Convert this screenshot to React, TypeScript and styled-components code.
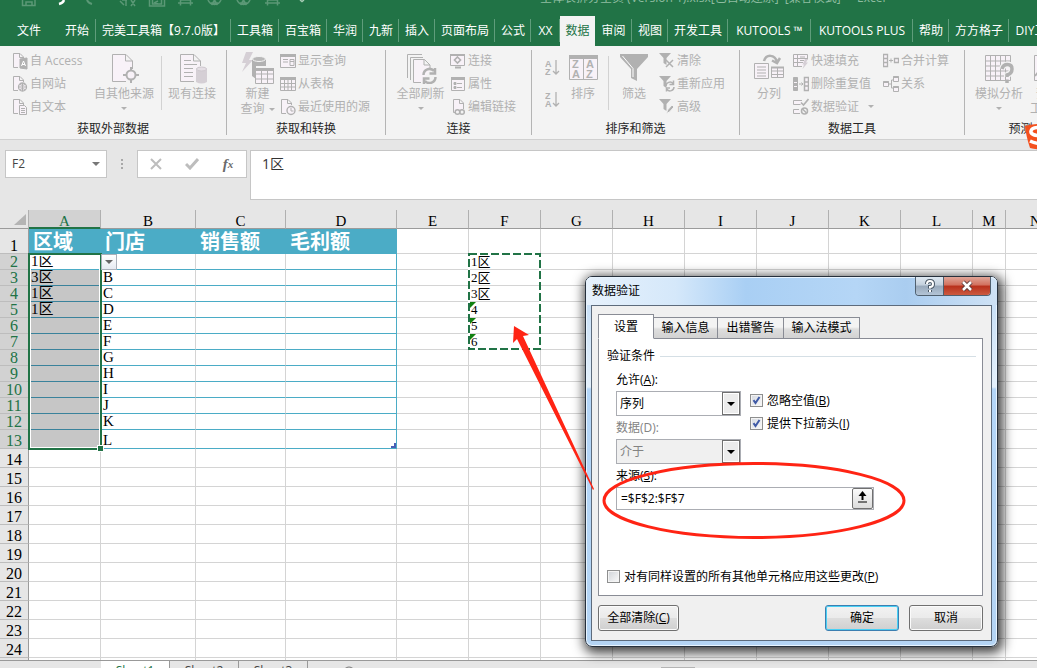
import React from "react";
import styled, { createGlobalStyle, css } from "styled-components";

const UI = `"Open Sans", "Noto Sans CJK SC", sans-serif`;
const CELL = `"Liberation Serif", "Noto Sans CJK SC", serif`;
const GREEN = "#217346";

const Global = createGlobalStyle`
  *, *::before, *::after { box-sizing: border-box; }
  body { margin: 0; background: #e6e6e6; font: 12px/16px ${UI}; color: #222; overflow: hidden; }
  button, input, select { font: inherit; color: inherit; margin: 0; }
`;

const Shell = styled.div`
  position: relative;
  display: flex;
  flex-direction: column;
  height: 100vh;
  overflow: hidden;
`;

/* ---------- title bar and tabs ---------- */

const TitleBar = styled.header`
  display: flex;
  align-items: flex-end;
  flex: 0 0 16px;
  overflow: hidden;
  background: ${GREEN};
  color: #8fbda1;
`;

const QuickAccess = styled.div`
  flex: 0 0 540px;
  height: 16px;
`;

const FileName = styled.span`
  height: 26px;
  white-space: pre;
  line-height: 16px;
`;

const TabBar = styled.nav`
  display: flex;
  flex: 0 0 30px;
  overflow: hidden;
  background: ${GREEN};
`;

const Tab = styled.button<{ $w: number; $active?: boolean; $line?: boolean }>`
  position: relative;
  flex: 0 0 ${(p) => p.$w}px;
  padding: 0;
  border: 0;
  white-space: nowrap;
  text-align: center;
  line-height: 28px;
  background: ${(p) => (p.$active ? "#f3f3f3" : "transparent")};
  color: ${(p) => (p.$active ? GREEN : "#fff")};
  ${(p) =>
    p.$line &&
    css`
      &::after {
        content: "";
        position: absolute;
        right: 0;
        top: 3px;
        bottom: 4px;
        width: 1px;
        background: #5f9d7b;
      }
    `}
`;

/* ---------- ribbon ---------- */

const Ribbon = styled.section`
  display: flex;
  flex: 0 0 94px;
  padding: 4px 0;
  overflow: hidden;
  background: #f3f3f3;
  border-bottom: 1px solid #d0d0d0;
  color: #b1b1b1;
`;

const Group = styled.div<{ $w: number; $pad: number }>`
  display: flex;
  flex-direction: column;
  flex: 0 0 ${(p) => p.$w}px;
  padding-left: ${(p) => p.$pad}px;
  border-right: 1px solid #b4b4b4;
`;

const GroupBody = styled.div`
  display: flex;
  flex: 0 0 70px;
`;

const GroupLabel = styled.div<{ $pad: number }>`
  margin-left: -${(p) => p.$pad}px;
  text-align: center;
  line-height: 18px;
  color: #262626;
`;

const SmallColumn = styled.div<{ $w: number }>`
  display: flex;
  flex-direction: column;
  flex: 0 0 ${(p) => p.$w}px;
  margin-top: -1px;
`;

const SmallButton = styled.button`
  display: flex;
  align-items: center;
  flex: none;
  gap: 2px;
  height: 23px;
  padding: 0;
  border: 0;
  background: none;
  white-space: nowrap;
  svg { flex: none; }
`;

const LargeButton = styled.button<{ $w: number }>`
  display: flex;
  flex-direction: column;
  align-items: center;
  flex: 0 0 ${(p) => p.$w}px;
  padding: 2px 0 0;
  border: 0;
  background: none;
  line-height: 15px;
  white-space: nowrap;
`;

const LargeLabel = styled.span`
  margin-top: 2px;
`;

const Caret = styled.i<{ $top?: number; $left?: number }>`
  display: inline-block;
  margin-top: ${(p) => p.$top ?? 0}px;
  margin-left: ${(p) => p.$left ?? 0}px;
  vertical-align: middle;
  border: 3px solid transparent;
  border-top-color: #b1b1b1;
  border-bottom: 0;
`;

const Divider = styled.div<{ $m: number }>`
  flex: 0 0 1px;
  height: 54px;
  margin: 6px ${(p) => p.$m}px 0;
  background: #d2d2d2;
`;

const FilterTools = styled.div`
  display: flex;
  gap: 9px;
`;

const SortColumn = styled.div`
  display: flex;
  flex-direction: column;
  gap: 12px;
  flex: 0 0 22px;
  padding-top: 8px;
`;

const IconButton = styled.button`
  height: 20px;
  padding: 0;
  border: 0;
  background: none;
  text-align: left;
`;

/* ---------- formula bar ---------- */

const FormulaBar = styled.section`
  display: flex;
  align-items: flex-start;
  flex: 0 0 70px;
  padding: 10px 0 0 5px;
  background: #e6e6e6;
`;

const NameBox = styled.div`
  display: flex;
  align-items: center;
  flex: 0 0 102px;
  min-width: 0;
  height: 28px;
  padding: 0 6px;
  background: #fff;
  border: 1px solid #c6c6c6;
`;

const NameInput = styled.input`
  flex: 1;
  width: 0;
  min-width: 0;
  padding: 0;
  border: 0;
  outline: 0;
  background: none;
  color: #444;
`;

const NameCaret = styled.i`
  border: 4px solid transparent;
  border-top-color: #777;
  border-bottom: 0;
`;

const Grip = styled.div`
  display: flex;
  flex-direction: column;
  align-items: center;
  gap: 2px;
  flex: 0 0 30px;
  padding-top: 9px;
  i { width: 2px; height: 2px; background: #a8a8a8; }
`;

const FormulaTools = styled.div`
  display: flex;
  flex: 0 0 110px;
  height: 28px;
  background: #fff;
  border: 1px solid #c6c6c6;
`;

const ToolButton = styled.button`
  display: flex;
  flex: 1;
  align-items: center;
  justify-content: center;
  padding: 0;
  border: 0;
  background: none;
  font: italic bold 15px/16px "Liberation Serif", serif;
  color: #6a6a6a;
  sub { font-size: 11px; line-height: 8px; vertical-align: baseline; }
`;

const FormulaInput = styled.input`
  flex: 1;
  min-width: 0;
  height: 50px;
  margin-left: 3px;
  padding: 0 11px 24px;
  border: 1px solid #c6c6c6;
  border-right: 0;
  border-radius: 0;
  outline: 0;
  background: #fff;
  font-size: 14px;
  color: #333;
`;

/* ---------- sheet ---------- */

const SheetArea = styled.main`
  flex: 1;
  min-height: 0;
  overflow: hidden;
  background: #fff;
`;

const Sheet = styled.table`
  width: 1066px;
  table-layout: fixed;
  border-spacing: 0;
  font: 15px/15px ${CELL};
  color: #000;
  th, td { padding: 0; font-weight: normal; white-space: nowrap; }
`;

const ColHead = styled.th<{ $sel?: boolean }>`
  height: 19px;
  line-height: 14px;
  vertical-align: bottom;
  border-right: 1px solid #b0b0b0;
  border-bottom: 1px solid ${(p) => (p.$sel ? GREEN : "#9b9b9b")};
  box-shadow: ${(p) => (p.$sel ? `inset 0 -1px ${GREEN}` : "none")};
  background: ${(p) => (p.$sel ? "#d2d2d2" : "#e6e6e6")};
  color: ${(p) => (p.$sel ? GREEN : "#000")};
`;

const Corner = styled(ColHead)`
  svg { display: block; margin: 0 0 3px 14px; }
`;

const RowHead = styled.th<{ $sel?: boolean }>`
  vertical-align: bottom;
  font-size: 16px;
  border-right: 1px solid #9b9b9b;
  border-bottom: 1px solid #bdbdbd;
  background: ${(p) => (p.$sel ? "#d2d2d2" : "#e6e6e6")};
  color: ${(p) => (p.$sel ? GREEN : "#000")};
`;

type CellKind = "plain" | "head" | "sel" | "active" | "table" | "tableEnd";

const Cell = styled.td<{ $kind: CellKind }>`
  position: relative;
  padding-left: 2px !important;
  vertical-align: bottom;
  border-right: 1px solid #d4d4d4;
  border-bottom: 1px solid #d4d4d4;
  ${(p) =>
    p.$kind === "head" &&
    css`
      padding-left: 4px !important;
      background: #4bacc6;
      border-color: #4bacc6;
      color: #fff;
      font-size: 20px;
      font-weight: bold !important;
      line-height: 21px;
    `}
  ${(p) =>
    p.$kind === "sel" &&
    css`
      background: #c6c6c6;
      border-bottom-color: #3a829b;
    `}
  ${(p) =>
    (p.$kind === "active" || p.$kind === "table" || p.$kind === "tableEnd") &&
    css`
      border-bottom-color: #4bacc6;
    `}
  ${(p) => p.$kind === "tableEnd" && css`border-right-color: #4bacc6;`}
`;

const ListText = styled.span`
  font-size: 13px;
`;

const Selection = styled.div`
  position: absolute;
  z-index: 1;
  left: -1px;
  top: -1px;
  width: 74px;
  height: 197px;
  border: 2px solid ${GREEN};
  box-shadow: inset 0 0 0 1px #fff;
  pointer-events: none;
  &::after {
    content: "";
    position: absolute;
    right: -3px;
    bottom: -3px;
    width: 5px;
    height: 5px;
    background: ${GREEN};
    outline: 1px solid #fff;
  }
`;

const DropButton = styled.button`
  position: absolute;
  z-index: 2;
  left: 0;
  top: 0;
  width: 16px;
  height: 16px;
  padding: 0;
  border: 1px solid #a9b0ba;
  background: linear-gradient(#fff, #e6ebf2);
  display: flex;
  align-items: center;
  justify-content: center;
`;

const Ants = styled.svg`
  position: absolute;
  z-index: 1;
  left: -1px;
  top: -1px;
  pointer-events: none;
`;

const ErrorMark = styled.i`
  position: absolute;
  left: 1px;
  top: 0;
  border: 3px solid #108010;
  border-right-color: transparent;
  border-bottom-color: transparent;
`;

const TableCorner = styled.svg`
  position: absolute;
  right: 0;
  bottom: 0;
`;

/* ---------- sheet tabs ---------- */

const SheetTabs = styled.footer`
  display: flex;
  flex: 0 0 8px;
  overflow: hidden;
  padding-left: 101px;
  border-top: 1px solid #999;
  background: #e6e6e6;
`;

const SheetTab = styled.button<{ $active?: boolean }>`
  flex: 0 0 69px;
  height: 20px;
  padding: 0;
  border: 0;
  border-right: 1px solid #999;
  background: ${(p) => (p.$active ? "#fff" : "none")};
  color: ${(p) => (p.$active ? GREEN : "#444")};
  line-height: 20px;
`;

const AddSheet = styled.button`
  flex: 0 0 82px;
  height: 24px;
  padding: 4px 0 0;
  border: 0;
  background: none;
`;

const ScrollTrack = styled.div`
  flex: 0 0 34px;
  height: 12px;
  margin: 6px 0 0 271px;
  background: #b4b4b4;
`;

/* ---------- dialog ---------- */

const Dialog = styled.section`
  position: absolute;
  z-index: 5;
  left: 585px;
  top: 276px;
  display: flex;
  flex-direction: column;
  width: 413px;
  padding: 0 5px 5px;
  border: 1px solid #26303c;
  border-radius: 7px;
  background: linear-gradient(#dcecfb 0, #c9e0f7 28px, #e4f0fb 110px, #b4d6f8 112px, #b4d4f4 100%);
  box-shadow: inset 0 0 0 1px #e8f4ff, 2px 3px 12px 3px rgba(0, 0, 0, 0.75);
  color: #000;
`;

const DialogTitle = styled.div`
  display: flex;
  justify-content: space-between;
  height: 28px;
  margin: 0 -5px;
  padding: 0 6px 0 5px;
  border-radius: 6px 6px 0 0;
  background: linear-gradient(90deg, #e6f1fc 0, #d5e8fa 90px, #a9cff4 160px, #b5d6f6 270px, #aacdf0 320px, #cfe2f5 100%);
  box-shadow: inset 0 1px #e8f4ff;
`;

const DialogName = styled.h2`
  margin: 6px 0 0 1px;
  font-size: 12px;
  line-height: 16px;
  font-weight: normal;
`;

const WindowButtons = styled.div`
  display: flex;
  height: 19px;
  border: 1px solid #50606f;
  border-top: 0;
  border-radius: 0 0 4px 4px;
  overflow: hidden;
`;

const WindowButton = styled.button<{ $close?: boolean }>`
  display: flex;
  align-items: center;
  justify-content: center;
  width: ${(p) => (p.$close ? 47 : 27)}px;
  padding: 0;
  border: 0;
  border-left: ${(p) => (p.$close ? "1px solid #50606f" : "0")};
  background: ${(p) =>
    p.$close
      ? "linear-gradient(#e0a598 0, #d2705d 45%, #b8301b 50%, #cc5a40 100%)"
      : "linear-gradient(#dfe9f2 0, #c3d0dd 45%, #98a9bb 50%, #b3c4d6 100%)"};
`;

const Client = styled.div`
  padding: 8px 8px 9px 6px;
  border: 1px solid #5d6b7c;
  background: #f0f0f0;
`;

const DialogTabs = styled.div`
  display: flex;
  align-items: flex-end;
  height: 25px;
  margin-bottom: -1px;
`;

const DialogTab = styled.button<{ $w: number; $active?: boolean }>`
  position: relative;
  width: ${(p) => p.$w}px;
  height: ${(p) => (p.$active ? 25 : 22)}px;
  padding: 0;
  border: 1px solid #898c95;
  border-left-width: ${(p) => (p.$active ? 1 : 0)}px;
  border-bottom-color: ${(p) => (p.$active ? "#fff" : "#898c95")};
  background: ${(p) => (p.$active ? "#fff" : "linear-gradient(#f3f3f3 45%, #dedede 55%, #d2d2d2)")};
`;

const Panel = styled.div`
  padding: 9px 6px 10px 8px;
  border: 1px solid #898c95;
  background: #fff;
`;

const Legend = styled.div`
  display: flex;
  align-items: center;
  gap: 5px;
  margin-bottom: 8px;
  &::after { content: ""; flex: 1; height: 1px; background: #d5dfe5; }
`;

const Fields = styled.div`
  display: flex;
  gap: 9px;
  padding-left: 9px;
`;

const SelectColumn = styled.div`
  display: flex;
  flex-direction: column;
  flex: 0 0 125px;
`;

const CheckColumn = styled.div`
  padding-top: 17px;
`;

const FieldLabel = styled.label<{ $off?: boolean }>`
  margin-bottom: 3px;
  color: ${(p) => (p.$off ? "#838383" : "#000")};
`;

const SelectBox = styled.div<{ $off?: boolean }>`
  position: relative;
  height: 25px;
  margin-bottom: 4px;
  border: 1px solid #abadb3;
  background: ${(p) => (p.$off ? "#f0f0f0" : "#fff")};
  color: ${(p) => (p.$off ? "#838383" : "#000")};
  select {
    width: 100%;
    height: 23px;
    padding: 0 3px;
    border: 0;
    outline: 0;
    appearance: none;
    background: none;
    opacity: 1;
  }
  svg {
    position: absolute;
    right: 0;
    top: 0;
    pointer-events: none;
  }
`;

const SourceRow = styled.div`
  display: flex;
  width: 258px;
  height: 23px;
  margin: 3px 0 58px 9px;
  border: 1px solid #abadb3;
  background: #fff;
`;

const SourceInput = styled.input`
  flex: 1;
  min-width: 0;
  padding: 0 4px;
  border: 0;
  outline: 0;
  background: none;
`;

const PickButton = styled.button`
  width: 21px;
  padding: 0;
  border: 1px solid #707070;
  border-radius: 2px;
  background: linear-gradient(#fbfbfb, #dcdcdc);
`;

const SourceLabel = styled.label`
  display: block;
  margin-left: 9px;
`;

const CheckLabel = styled.label<{ $tall?: boolean }>`
  display: flex;
  align-items: center;
  gap: 4px;
  height: ${(p) => (p.$tall ? 23 : 17)}px;
  white-space: nowrap;
`;

const Check = styled.input`
  appearance: none;
  width: 13px;
  height: 13px;
  border: 1px solid #8e8f8f;
  background: linear-gradient(135deg, #cfd3d8, #fafafa);
  box-shadow: inset 0 0 0 1px #f4f4f4;
  &:checked {
    background: url("data:image/svg+xml,%3Csvg xmlns='http://www.w3.org/2000/svg' viewBox='0 0 11 11'%3E%3Cpath d='M2.5 5.2L4.5 8 8.5 2' fill='none' stroke='%233f5aa6' stroke-width='2'/%3E%3C/svg%3E"), linear-gradient(135deg, #d5d9e0, #fafafa);
  }
`;

const Actions = styled.div`
  display: flex;
  gap: 10px;
  margin-top: 9px;
`;

const ActionButton = styled.button<{ $w: number; $main?: boolean; $first?: boolean }>`
  width: ${(p) => p.$w}px;
  height: 26px;
  margin-right: ${(p) => (p.$first ? "auto" : 0)};
  padding: 0;
  border: 1px solid ${(p) => (p.$main ? "#3c7fb1" : "#707070")};
  border-radius: 3px;
  background: linear-gradient(#f2f2f2, #ebebeb 48%, #dddddd 52%, #cfcfcf);
  box-shadow: inset 0 0 0 1px ${(p) => (p.$main ? "#48d0f5" : "#fbfbfb")};
`;

const Annotation = styled.svg`
  position: absolute;
  z-index: 6;
  left: 500px;
  top: 310px;
  pointer-events: none;
`;

const SideBadge = styled.svg`
  position: absolute;
  z-index: 4;
  left: 1024px;
  top: 122px;
`;

/* ---------- icons ---------- */

const G = "#b1b1b1";
const P = "#f8f2f8";

const SmallIcon = ({ children }: { children: React.ReactNode }) => (
  <svg width="16" height="18" viewBox="0 0 16 18" fill="none" stroke={G} strokeWidth="1">
    {children}
  </svg>
);
const BigIcon = ({ children, w = 32 }: { children: React.ReactNode; w?: number }) => (
  <svg width={w} height="32" viewBox={`0 0 ${w} 32`} fill="none" stroke={G} strokeWidth="1">
    {children}
  </svg>
);

const page = "M6 15.5H1.5V1.5H8L11.5 5v2M7.5 1.5v4h4";
const icons: Record<string, React.ReactNode> = {
  access: (
    <SmallIcon>
      <path d={page} fill={P} />
      <path d="M8 7l7-1v11l-7-1z" fill={G} />
      <path d="M9.5 14l2-5 2 5M10 12.500h3" stroke="#fff" />
    </SmallIcon>
  ),
  web: (
    <SmallIcon>
      <path d={page} fill={P} />
      <circle cx="10.500" cy="12" r="4" fill={P} strokeWidth="1.300" />
      <path d="M6.500 12h8M10.500 8v8M8 9.500q2.500 2 5 0M8 14.500q2.500-2 5 0" />
    </SmallIcon>
  ),
  text: (
    <SmallIcon>
      <path d={page} fill={P} />
      <path d="M7.500 7.500h5l2 2v7h-7zM9 10.500h4M9 12.500h4M9 14.500h4" fill={P} />
    </SmallIcon>
  ),
  showQuery: (
    <SmallIcon>
      <path d="M.5 2.500h15v13H.5z" fill={P} />
      <path d="M0 3.500h16" strokeWidth="3" />
      <path d="M3 7.500h5M3 10h5M10 7.500h4v6h-4zM10 9.500h4" />
    </SmallIcon>
  ),
  table: (
    <SmallIcon>
      <path d="M.5 2.500h15v13H.5zM.5 8.500h15M.5 12h15M4.500 3v12.500M8 3v12.500M11.500 3v12.500" fill={P} />
      <path d="M0 3.500h16" strokeWidth="3" />
    </SmallIcon>
  ),
  recent: (
    <SmallIcon>
      <path d={page} fill={P} />
      <circle cx="11" cy="12.500" r="4" fill={P} strokeWidth="1.400" />
      <path d="M11 10v3h2.500" />
    </SmallIcon>
  ),
  link: (
    <SmallIcon>
      <path d="M.5 2.500h14v11H.5z" fill={P} />
      <path d="M0 3h15M5 15.500h6" strokeWidth="2" />
      <path d="M7.500 5L10.500 8l-3 3-3-3z" strokeWidth="1.600" />
    </SmallIcon>
  ),
  props: (
    <SmallIcon>
      <path d="M1.500 2.500h13v13h-13z" fill={P} />
      <path d="M1 3.500h14" strokeWidth="3" />
      <path d="M7 8.500h5M7 12.500h5" />
      <path d="M4 7.500h2v2H4zM4 11.500h2v2H4z" fill={G} />
    </SmallIcon>
  ),
  editLink: (
    <SmallIcon>
      <path d="M5 14.500H3.500v-13H10L13.500 5v6M9.500 1.500v4h4" fill={P} />
      <circle cx="7.500" cy="14" r="2.300" strokeWidth="1.500" />
      <circle cx="12" cy="14" r="2.300" strokeWidth="1.500" />
    </SmallIcon>
  ),
  clear: (
    <SmallIcon>
      <path d="M0 1h12L7.500 6v7L4.500 11V6z" fill={G} stroke="none" />
      <path d="M7 8l7 7M14 8l-7 7" strokeWidth="1.500" />
    </SmallIcon>
  ),
  reapply: (
    <SmallIcon>
      <path d="M0 1h12L7.500 6v7L4.500 11V6z" fill={G} stroke="none" />
      <path d="M7 11a4 4 0 0 1 7-2.500M14.500 5.500v4h-4M15 12a4 4 0 0 1-7 2.500M7.500 16.500v-3.500h3.500" strokeWidth="1.500" />
    </SmallIcon>
  ),
  advanced: (
    <SmallIcon>
      <path d="M0 1h12L7.500 6v7L4.500 11V6z" fill={G} stroke="none" />
      <path d="M7.500 15.500l1-3.500 4.500-5 2 2-4.500 5z" fill={G} stroke="#f3f3f3" />
    </SmallIcon>
  ),
  flash: (
    <SmallIcon>
      <path d="M9 14.500H.5v-12h14v5M.5 6.500h14M.5 10.500H10M4.500 2.500v12M7 5h5M7 8.500h4" fill={P} />
      <path d="M12 7h3l-2 3.500h2L9.500 17l1.500-4.500H9.500z" fill="#d5cfd5" stroke="none" />
    </SmallIcon>
  ),
  dedupe: (
    <SmallIcon>
      <path d="M.5 2.500h4v13h-4zM.5 7h4M.5 11h4" fill={G} />
      <path d="M1 7.500h3M1 11.500h3" stroke={P} />
      <path d="M11.500 2.500h4v13h-4zM11.500 7h4M11.500 11h4" fill={P} strokeWidth="1.500" />
      <path d="M6 9h4M8.500 7.500L10 9l-1.500 1.500" />
    </SmallIcon>
  ),
  validate: (
    <SmallIcon>
      <path d="M9 2.500H.5v4h7M6 11.500H.5v4H7" fill={P} />
      <path d="M8 4.500l2.500 2.500L15.500 1" strokeWidth="1.600" />
      <circle cx="11.500" cy="13" r="3" strokeWidth="1.500" />
      <path d="M9.500 11l4 4" strokeWidth="1.500" />
    </SmallIcon>
  ),
  consolidate: (
    <SmallIcon>
      <path d="M.5 2.500h4v12h-4zM.5 6.500h4M.5 10.500h4M11.500 6.500h4v4h-4z" fill={P} strokeWidth="1.300" />
      <path d="M6 8.500h4M8 6.500v4" />
    </SmallIcon>
  ),
  relations: (
    <SmallIcon>
      <path d="M6 9h2.500V5M8.500 9v4h2M8.500 5h2" />
      <path d="M.5 6.500h5v5h-5zM10.500 1.500h5v5h-5zM10.500 11.500h5v5h-5z" fill={P} />
      <path d="M.5 7h5M10.500 2h5M10.500 12h5" strokeWidth="2" />
    </SmallIcon>
  ),
};

const letters = { fill: G, stroke: "none", fontFamily: "Liberation Sans", fontSize: 9, fontWeight: 700 };

const SortIcon = ({ a, b }: { a: string; b: string }) => (
  <svg width="16" height="20" viewBox="0 0 16 20" fill="none" stroke={G}>
    <text x="0" y="9" {...letters}>{a}</text>
    <text x="0" y="17" {...letters}>{b}</text>
    <path d="M11 2v14M8 13l3 3 3-3" strokeWidth="1.300" />
  </svg>
);

const big: Record<string, React.ReactNode> = {
  other: (
    <BigIcon>
      <path d="M18 29.500H4.500v-27H18L24.500 9v8M17.500 2.500V9h7" fill={P} />
      <circle cx="23" cy="23" r="4.500" strokeWidth="2" fill={P} />
      <path d="M23 15v4M23 27v4M15 23h4M27 23h4" strokeWidth="2" />
    </BigIcon>
  ),
  existing: (
    <BigIcon>
      <path d="M18 29.500H4.500v-27H18L24.500 9v5M17.500 2.500V9h7" fill={P} />
      <path d="M8 8.500h7M8 12.500h13M8 16.500h9M8 20.500h9M8 24.500h9" />
      <path d="M20 16.500q5.500-3 11 0V30q-5.500 3-11 0z" fill="#d5cfd5" stroke="none" />
      <ellipse cx="25.500" cy="17" rx="5" ry="2" fill="#e4dee4" stroke="#cfc9cf" />
    </BigIcon>
  ),
  query: (
    <BigIcon>
      <path d="M4 0h7L7 8h4L0 20l4-9H0z" fill="#d5cfd5" stroke="none" />
      <path d="M10 7q7-4 14 0v7h-10v13l-4-3z" fill={G} stroke="none" />
      <ellipse cx="17" cy="7" rx="6.500" ry="2.500" fill="#b8b8b8" stroke="#f3f3f3" />
      <path d="M13.500 17.500h18v14h-18zM13.500 22h18M13.500 27h18M19.500 18v13M25.500 18v13" fill={P} />
      <path d="M13 17.500h19" strokeWidth="3" />
    </BigIcon>
  ),
  refresh: (
    <BigIcon>
      <path d="M2.500 26V2.500H17M5.500 28V5.500H18" />
      <path d="M16 30.500H8.500v-23h11L25 13v5M19 7.500V13h6" fill={P} />
      <path d="M18.500 23a6 6 0 0 1 10.500-4M30 16v5.500h-5.500M30.500 25a6 6 0 0 1-10.500 4M19 32v-5.500h5.500" strokeWidth="2.500" />
    </BigIcon>
  ),
  sort: (
    <BigIcon>
      <path d="M2.500 4.500h28v23h-28zM16.500 4v23.500" fill={P} />
      <path d="M2 5h29" strokeWidth="4" />
      <text x="5" y="16" {...letters} fontSize={11}>Z</text>
      <text x="5" y="26" {...letters} fontSize={11}>A</text>
      <text x="19" y="16" {...letters} fontSize={11}>A</text>
      <text x="19" y="26" {...letters} fontSize={11}>Z</text>
    </BigIcon>
  ),
  filter: (
    <BigIcon>
      <path d="M2 2h28v3L19 17v12l-6-3V17L2 5z" fill={G} stroke="none" />
      <path d="M4.500 4L15 16.500V25" stroke="#fff" />
    </BigIcon>
  ),
  columns: (
    <BigIcon>
      <path d="M1.500 11.500h14v15h-14zM4 15h9M4 18h9M4 21h9M4 24h9" fill={P} />
      <path d="M18.500 15.500h12v10h-12zM18.500 19h12M18.500 22.500h12M24.500 15.500v10" fill={P} />
      <path d="M18 15.500h13" strokeWidth="2" />
      <path d="M11 9c2-7 11-7 13 1M27 6l-3 5-5-2.500" strokeWidth="2.500" />
    </BigIcon>
  ),
  whatIf: (
    <BigIcon>
      <path d="M2.500 3.500h25v25h-25zM2.500 9h25M2.500 14h25M2.500 19h25M2.500 24h25M7.500 3.500v25M12.500 3.500v25M17.500 3.500v25M22.500 3.500v25" fill={P} />
      <path d="M19 17q1-4.500 5.500-4.500T29 17t-5 6v2" stroke="#f3f3f3" strokeWidth="6" />
      <path d="M19 17q1-4.500 5.500-4.500T29 17t-5 6v2M24 27.500v3.500" strokeWidth="3.500" />
    </BigIcon>
  ),
  forecast: (
    <BigIcon>
      <path d="M2.500 3.500h25v25h-25z" fill={P} />
      <path d="M3 24l8-10 6 5 9-12" strokeWidth="2" />
    </BigIcon>
  ),
};

const Small = ({ icon, label, caret }: { icon: string; label: string; caret?: boolean }) => (
  <SmallButton>
    {icons[icon]}
    <span>{label}</span>
    {caret && <Caret $left={7} />}
  </SmallButton>
);

const Large = ({ icon, label, w, caret }: { icon: string; label: string; w: number; caret?: boolean }) => (
  <LargeButton $w={w}>
    {big[icon]}
    <LargeLabel>{label}</LargeLabel>
    {caret && <Caret $top={6} />}
  </LargeButton>
);

/* ---------- data ---------- */

const tabs: [string, number, number?][] = [
  ["文件", 58, 0],
  ["开始", 38],
  ["完美工具箱【9.7.0版】", 135],
  ["工具箱", 48],
  ["百宝箱", 48],
  ["华润", 36],
  ["九新", 36],
  ["插入", 36],
  ["页面布局", 60],
  ["公式", 36],
  ["XX", 29],
  ["数据", 35, 0],
  ["审阅", 37],
  ["视图", 36],
  ["开发工具", 60],
  ["KUTOOLS ™", 83],
  ["KUTOOLS PLUS", 102],
  ["帮助", 36],
  ["方方格子", 60],
  ["DIY工具箱", 68],
];

const columns: [string, number][] = [
  ["A", 72], ["B", 95], ["C", 90], ["D", 111], ["E", 72], ["F", 72], ["G", 72],
  ["H", 72], ["I", 72], ["J", 72], ["K", 72], ["L", 72], ["M", 33], ["N", 60],
];

const values: Record<string, string> = {
  A1: "区域", B1: "门店", C1: "销售额", D1: "毛利额",
  A2: "1区", A3: "3区", A4: "1区", A5: "1区",
  B3: "B", B4: "C", B5: "D", B6: "E", B7: "F", B8: "G", B9: "H", B10: "I", B11: "J", B12: "K", B13: "L",
  F2: "1区", F3: "2区", F4: "3区", F5: "4", F6: "5", F7: "6",
};

const rows = Array.from({ length: 25 }, (_, i) => i + 1);
const rowHeight = (r: number) => (r === 1 ? 25 : r <= 12 ? 16 : 19);

const kindOf = (col: string, r: number): CellKind => {
  if (r > 13 || !"ABCD".includes(col)) return "plain";
  if (r === 1) return "head";
  if (col === "A") return r === 2 ? "active" : "sel";
  return col === "D" ? "tableEnd" : "table";
};

const Extras = ({ id }: { id: string }) => {
  if (id === "A2") return <Selection />;
  if (id === "B2")
    return (
      <DropButton aria-label="下拉">
        <svg width="8" height="4"><path d="M0 0h8L4 4z" fill="#666" /></svg>
      </DropButton>
    );
  if (id === "F2")
    return (
      <Ants width="73" height="97">
        <rect x="1" y="1" width="71" height="95" fill="none" stroke="#fff" strokeWidth="2" />
        <rect x="1" y="1" width="71" height="95" fill="none" stroke={GREEN} strokeWidth="2" strokeDasharray="8 3" />
      </Ants>
    );
  if (id === "F5" || id === "F6" || id === "F7") return <ErrorMark />;
  if (id === "D13")
    return (
      <TableCorner width="5" height="5"><path d="M3 0h2v5H0V3h3z" fill="#4a5fb5" /></TableCorner>
    );
  return null;
};

export default function App() {
  return (
    <Shell>
      <Global />
      <TitleBar>
        <QuickAccess>
          <svg width="320" height="16" viewBox="0 0 320 16" fill="none" stroke="#5b9876" strokeWidth="1.500">
            <path d="M22.500 0v5.500h12.500V0M26 5V2h6v3" />
            <path d="M64 0q-1 3-5 4" stroke="#fff" strokeWidth="2.500" />
            <path d="M87 0q1 3 5 4" strokeWidth="2" />
            <path d="M120 1l4 4M126 0v6M131 0l4 6M135 0l-4 6M122 0h5" />
            <path d="M149.500 0v6h15V0M152.500 0v4h9V0M158 1l-3 1.500 3 1.500" />
            <path d="M178 3h15M180.500 5.500V0M190.500 5.500V0M181 0h9" />
            <path d="M208 0a7 7 0 0 0 13 0M214.500 0l-3 5M214.500 0l3 5M211 3l7 0" />
            <path d="M237 0a7 7 0 0 0 13 0M243.500 0l-3 5M243.500 0l3 5M240 3h7" />
            <path d="M265 3h15M267.500 5.500V0M277.500 5.500V0M268 0h9" />
            <path d="M300 0l2 1.500L304 0" stroke="#a5cbb4" />
          </svg>
        </QuickAccess>
        <FileName>全体表拆分全员 (Version 1).xlsx[已自动还原]  [兼容模式]  -  Excel</FileName>
      </TitleBar>

      <TabBar>
        {tabs.map(([name, w, line]) => (
          <Tab key={name} $w={w} $active={name === "数据"} $line={line !== 0}>
            {name}
          </Tab>
        ))}
      </TabBar>

      <Ribbon>
        <Group $w={227} $pad={12}>
          <GroupBody>
            <SmallColumn $w={78}>
              <Small icon="access" label="自 Access" />
              <Small icon="web" label="自网站" />
              <Small icon="text" label="自文本" />
            </SmallColumn>
            <Large icon="other" label="自其他来源" w={68} caret />
            <Divider $m={3} />
            <Large icon="existing" label="现有连接" w={54} />
          </GroupBody>
          <GroupLabel $pad={12}>获取外部数据</GroupLabel>
        </Group>
        <Group $w={159} $pad={8}>
          <GroupBody>
            <LargeButton $w={45}>
              {big.query}
              <LargeLabel>
                新建
                <br />
                查询
                <Caret $left={4} />
              </LargeLabel>
            </LargeButton>
            <SmallColumn $w={100}>
              <Small icon="showQuery" label="显示查询" />
              <Small icon="table" label="从表格" />
              <Small icon="recent" label="最近使用的源" />
            </SmallColumn>
          </GroupBody>
          <GroupLabel $pad={8}>获取和转换</GroupLabel>
        </Group>
        <Group $w={146} $pad={5}>
          <GroupBody>
            <Large icon="refresh" label="全部刷新" w={59} caret />
            <SmallColumn $w={78}>
              <Small icon="link" label="连接" />
              <Small icon="props" label="属性" />
              <Small icon="editLink" label="编辑链接" />
            </SmallColumn>
          </GroupBody>
          <GroupLabel $pad={5}>连接</GroupLabel>
        </Group>
        <Group $w={208} $pad={13}>
          <GroupBody>
            <SortColumn>
              <IconButton aria-label="升序"><SortIcon a="A" b="Z" /></IconButton>
              <IconButton aria-label="降序"><SortIcon a="Z" b="A" /></IconButton>
            </SortColumn>
            <Large icon="sort" label="排序" w={32} />
            <Divider $m={9} />
            <FilterTools>
              <Large icon="filter" label="筛选" w={32} />
              <SmallColumn $w={72}>
                <Small icon="clear" label="清除" />
                <Small icon="reapply" label="重新应用" />
                <Small icon="advanced" label="高级" />
              </SmallColumn>
            </FilterTools>
          </GroupBody>
          <GroupLabel $pad={13}>排序和筛选</GroupLabel>
        </Group>
        <Group $w={225} $pad={5}>
          <GroupBody>
            <Large icon="columns" label="分列" w={48} />
            <SmallColumn $w={90}>
              <Small icon="flash" label="快速填充" />
              <Small icon="dedupe" label="删除重复值" />
              <Small icon="validate" label="数据验证" caret />
            </SmallColumn>
            <SmallColumn $w={74}>
              <Small icon="consolidate" label="合并计算" />
              <Small icon="relations" label="关系" />
            </SmallColumn>
          </GroupBody>
          <GroupLabel $pad={5}>数据工具</GroupLabel>
        </Group>
        <Group $w={112} $pad={4}>
          <GroupBody>
            <Large icon="whatIf" label="模拟分析" w={60} caret />
            <LargeButton $w={38}>
              {big.forecast}
              <LargeLabel>
                预测
                <br />
                工作表
              </LargeLabel>
            </LargeButton>
          </GroupBody>
          <GroupLabel $pad={4}>预测</GroupLabel>
        </Group>
      </Ribbon>

      <FormulaBar>
        <NameBox>
          <NameInput aria-label="名称框" defaultValue="F2" />
          <NameCaret />
        </NameBox>
        <Grip><i /><i /><i /></Grip>
        <FormulaTools>
          <ToolButton aria-label="取消输入">
            <svg width="12" height="12" stroke="#bdbdbd" strokeWidth="2"><path d="M1 1l10 10M11 1L1 11" /></svg>
          </ToolButton>
          <ToolButton aria-label="输入">
            <svg width="14" height="12" fill="none" stroke="#bdbdbd" strokeWidth="3"><path d="M1 6l4 4 8-9" /></svg>
          </ToolButton>
          <ToolButton>f<sub>x</sub></ToolButton>
        </FormulaTools>
        <FormulaInput aria-label="编辑栏" defaultValue="1区" />
      </FormulaBar>

      <SheetArea>
        <Sheet>
          <colgroup>
            <col style={{ width: 29 }} />
            {columns.map(([c, w]) => <col key={c} style={{ width: w }} />)}
          </colgroup>
          <thead>
            <tr>
              <Corner>
                <svg width="12" height="11"><path d="M12 0v11H0z" fill="#b4b4b4" /></svg>
              </Corner>
              {columns.map(([c]) => <ColHead key={c} $sel={c === "A"}>{c}</ColHead>)}
            </tr>
          </thead>
          <tbody>
            {rows.map((r) => (
              <tr key={r} style={{ height: rowHeight(r) }}>
                <RowHead $sel={r > 1 && r < 14}>{r}</RowHead>
                {columns.map(([c]) => {
                  const id = c + r;
                  return (
                    <Cell key={c} $kind={kindOf(c, r)}>
                      {c === "F" ? <ListText>{values[id]}</ListText> : values[id]}
                      <Extras id={id} />
                    </Cell>
                  );
                })}
              </tr>
            ))}
          </tbody>
        </Sheet>
      </SheetArea>

      <SheetTabs>
        <SheetTab $active>Sheet1</SheetTab>
        <SheetTab>Sheet2</SheetTab>
        <SheetTab>Sheet3</SheetTab>
        <AddSheet aria-label="新工作表">
          <svg width="14" height="14" fill="none" stroke="#777"><circle cx="7" cy="7" r="6" /><path d="M7 4v6M4 7h6" /></svg>
        </AddSheet>
        <ScrollTrack />
      </SheetTabs>

      <SideBadge width="32" height="30" viewBox="0 0 32 30">
        <path d="M1 4q8-3 26-2v24q-10 3-21 0Q2 14 1 4z" fill="#f4511e" />
        <path d="M22 6Q8 4 7 9t13 5M6 19q8 4 16 1" fill="none" stroke="#fff" strokeWidth="3.500" />
      </SideBadge>

      <Dialog role="dialog" aria-label="数据验证">
        <DialogTitle>
          <DialogName>数据验证</DialogName>
          <WindowButtons>
            <WindowButton aria-label="帮助">
              <svg width="12" height="14" fill="none">
                <path d="M3 5q0-3 3-3t3 3-3 3v1.500M6 11v2" stroke="#4a5866" strokeWidth="4" />
                <path d="M3 5q0-3 3-3t3 3-3 3v1.500M6 11v2" stroke="#fff" strokeWidth="2" />
              </svg>
            </WindowButton>
            <WindowButton $close aria-label="关闭">
              <svg width="14" height="12" fill="none">
                <path d="M3 2l8 8M11 2l-8 8" stroke="#5a3a3a" strokeWidth="4.500" />
                <path d="M3 2l8 8M11 2l-8 8" stroke="#fff" strokeWidth="2.500" />
              </svg>
            </WindowButton>
          </WindowButtons>
        </DialogTitle>
        <Client>
          <DialogTabs>
            <DialogTab $w={56} $active>设置</DialogTab>
            <DialogTab $w={64}>输入信息</DialogTab>
            <DialogTab $w={66}>出错警告</DialogTab>
            <DialogTab $w={76}>输入法模式</DialogTab>
          </DialogTabs>
          <Panel>
            <Legend>验证条件</Legend>
            <Fields>
              <SelectColumn>
                <FieldLabel htmlFor="allow">允许(<u>A</u>):</FieldLabel>
                <SelectBox>
                  <select id="allow" defaultValue="序列"><option>序列</option></select>
                  <ComboArrow />
                </SelectBox>
                <FieldLabel htmlFor="data" $off>数据(D):</FieldLabel>
                <SelectBox $off>
                  <select id="data" disabled defaultValue="介于"><option>介于</option></select>
                  <ComboArrow />
                </SelectBox>
              </SelectColumn>
              <CheckColumn>
                <CheckLabel $tall><Check type="checkbox" defaultChecked /><span>忽略空值(<u>B</u>)</span></CheckLabel>
                <CheckLabel $tall><Check type="checkbox" defaultChecked /><span>提供下拉箭头(<u>I</u>)</span></CheckLabel>
              </CheckColumn>
            </Fields>
            <SourceLabel htmlFor="source">来源(<u>S</u>):</SourceLabel>
            <SourceRow>
              <SourceInput id="source" defaultValue="=$F$2:$F$7" />
              <PickButton aria-label="选择区域">
                <svg width="11" height="12" fill="none" stroke="#000"><path d="M5.500 9V3" strokeWidth="2" /><path d="M1.500 5L5.500 0l4 5z" fill="#000" stroke="none" /><path d="M1 11h9" /></svg>
              </PickButton>
            </SourceRow>
            <CheckLabel><Check type="checkbox" /><span>对有同样设置的所有其他单元格应用这些更改(<u>P</u>)</span></CheckLabel>
          </Panel>
          <Actions>
            <ActionButton $w={81} $first>全部清除(<u>C</u>)</ActionButton>
            <ActionButton $w={74} $main>确定</ActionButton>
            <ActionButton $w={74}>取消</ActionButton>
          </Actions>
        </Client>
      </Dialog>

      <Annotation width="410" height="235" viewBox="500 310 410 235">
        <path d="M514 326L529 335 523 336 594 489 593 490 517 339 513 343z" fill="#ff2414" />
        <ellipse cx="754" cy="500.500" rx="150" ry="37" fill="none" stroke="#ff2414" strokeWidth="3" />
      </Annotation>
    </Shell>
  );
}

function ComboArrow() {
  return (
    <svg width="18" height="23">
      <rect x=".5" y=".5" width="17" height="22" fill="#ececec" stroke="#707070" />
      <rect x="1.500" y="1.500" width="15" height="20" fill="none" stroke="#fff" />
      <path d="M5 10h8l-4 4z" fill="#000" />
    </svg>
  );
}
